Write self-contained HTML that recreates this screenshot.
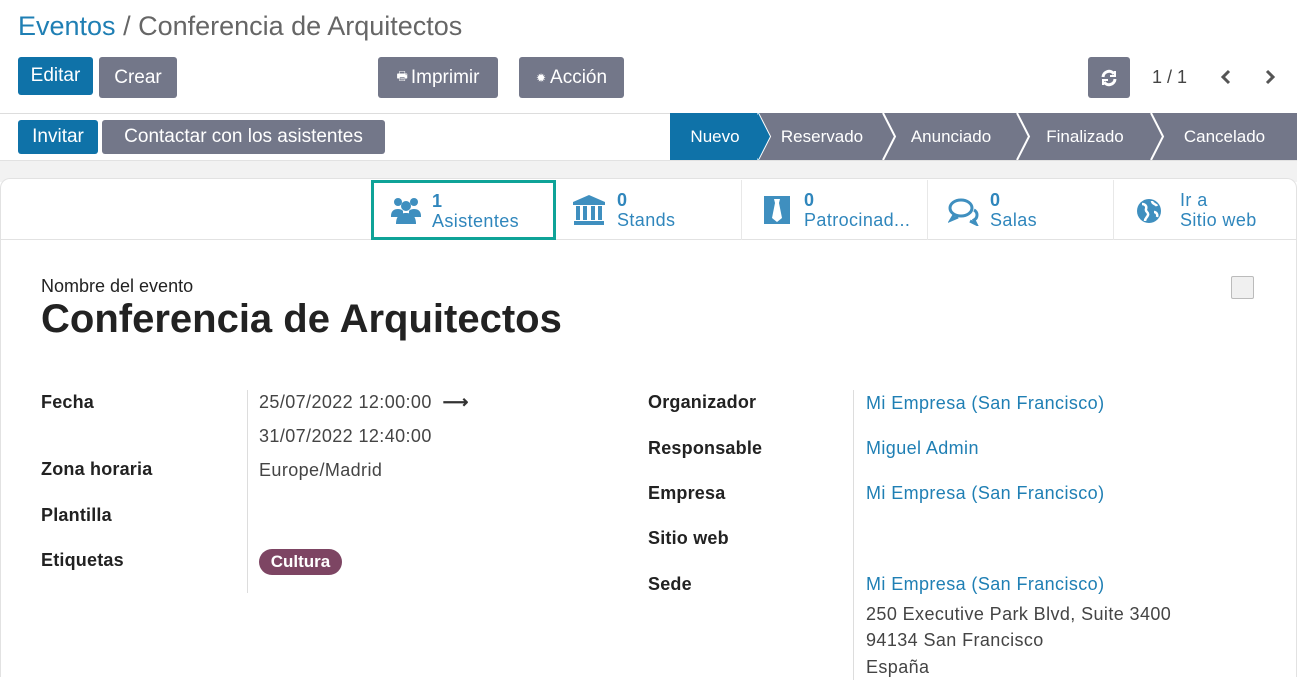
<!DOCTYPE html>
<html><head><meta charset="utf-8"><style>
*{box-sizing:border-box;margin:0;padding:0}
body{width:1297px;height:677px;overflow:hidden;background:#fff;font-family:"Liberation Sans",sans-serif;color:#444;position:relative}
.a{position:absolute;white-space:nowrap}
.btn{position:absolute;color:#fff;font-size:19px;display:flex;align-items:center;justify-content:center;border-radius:3px}
.blue{background:#0f72a8}.grey{background:#737789}
.st{position:absolute;top:113px;height:47px;background:#737789;color:#fff;font-size:17px;display:flex;align-items:center;justify-content:center}
.lbl{position:absolute;font-size:18px;font-weight:bold;color:#222;letter-spacing:0.2px}
.val{position:absolute;font-size:18px;color:#444;white-space:nowrap;letter-spacing:0.4px}
.lnk{color:#1f7fb4}
.sb{position:absolute;top:180px;height:60px;border-left:1px solid #e8e8e8;color:#2f86bc;font-size:18px}
.sb .n{position:absolute;top:10px;font-weight:bold}
.sb .t{position:absolute;top:30px;white-space:nowrap;letter-spacing:0.4px}
</style></head><body>
<div class="a" style="left:18px;top:11px;font-size:27px;color:#666"><span style="color:#1f7fb4">Eventos</span> / Conferencia de Arquitectos</div>
<div class="btn blue" style="left:18px;top:57px;width:75px;height:38px">Editar</div>
<div class="btn grey" style="left:99px;top:57px;width:78px;height:41px">Crear</div>
<div class="btn grey" style="left:378px;top:57px;width:120px;height:41px"><span style="font-size:12px;margin-right:3px">🖶</span>Imprimir</div>
<div class="btn grey" style="left:519px;top:57px;width:105px;height:41px"><span style="font-size:12px;margin-right:4px">✹</span>Acción</div>
<div class="btn grey" style="left:1088px;top:57px;width:42px;height:41px"><svg width="18" height="18" viewBox="0 0 18 18" fill="none" stroke="#fff" stroke-width="3"><path d="M3 8a6 6 0 0 1 11-3"/><path d="M15 10a6 6 0 0 1-11 3"/><path d="M15 2v5h-5M3 16v-5h5" stroke-width="2"/></svg></div>
<div class="a" style="left:1152px;top:67px;font-size:18px;color:#444">1 / 1</div>
<svg class="a" style="left:1220px;top:69px" width="12" height="16"><path d="M9 2 3 8l6 6" stroke="#555" stroke-width="3" fill="none"/></svg>
<svg class="a" style="left:1264px;top:69px" width="12" height="16"><path d="M3 2l6 6-6 6" stroke="#555" stroke-width="3" fill="none"/></svg>
<div class="a" style="left:0;top:113px;width:1297px;border-top:1px solid #ddd"></div>
<div class="btn blue" style="left:18px;top:120px;width:80px;height:34px">Invitar</div>
<div class="btn grey" style="left:102px;top:120px;width:283px;height:34px">Contactar con los asistentes</div>
<div class="st" style="left:670px;width:90px;background:#0f72a8">Nuevo</div>
<div class="st" style="left:760px;width:124px">Reservado</div>
<div class="st" style="left:884px;width:134px">Anunciado</div>
<div class="st" style="left:1018px;width:134px">Finalizado</div>
<div class="st" style="left:1152px;width:145px">Cancelado</div>
<svg class="a" style="left:670px;top:113px" width="627" height="47"><g fill="none" stroke="#fff" stroke-width="2"><path d="M88 0l12 23.5L88 47"/><path d="M213 0l12 23.5L213 47"/><path d="M347 0l12 23.5L347 47"/><path d="M481 0l12 23.5L481 47"/></g><path d="M88 0l12 23.5L88 47z" fill="#0f72a8"/></svg>
<div class="a" style="left:0;top:160px;width:1297px;height:22px;background:#f2f2f2;border-top:1px solid #e2e2e2"></div>
<div class="a" style="left:0;top:178px;width:1297px;height:499px;background:#fff;border:1px solid #e2e2e2;border-bottom:none;border-radius:10px 10px 0 0"></div>
<div class="a" style="left:0;top:239px;width:1297px;border-top:1px solid #e2e2e2"></div>
<div class="sb" style="left:371px;width:185px;border:3px solid #0fa398;top:180px;height:60px">
<svg style="position:absolute;left:15px;top:13px" width="34" height="30" viewBox="0 0 34 30" fill="#3f8fbf"><circle cx="9" cy="6" r="4"/><circle cx="25" cy="6" r="4"/><circle cx="17" cy="10" r="5"/><path d="M2 20c0-5 3-7 7-7s5 2 5 2v6H2z"/><path d="M32 20c0-5-3-7-7-7s-5 2-5 2v6h12z"/><path d="M7 28c0-8 4-11 10-11s10 3 10 11z"/></svg>
<div class="n" style="left:58px;top:8px">1</div><div class="t" style="left:58px;top:28px">Asistentes</div></div>
<div class="sb" style="left:556px;width:185px;border-left:none">
<svg style="position:absolute;left:16px;top:15px" width="34" height="32" viewBox="0 0 34 32" fill="#3f8fbf"><path d="M17 0 1 7v3h32V7z"/><rect x="4" y="11" width="4" height="14"/><rect x="11" y="11" width="4" height="14"/><rect x="19" y="11" width="4" height="14"/><rect x="26" y="11" width="4" height="14"/><rect x="2" y="26" width="30" height="4"/></svg>
<div class="n" style="left:61px">0</div><div class="t" style="left:61px">Stands</div></div>
<div class="sb" style="left:741px;width:186px">
<svg style="position:absolute;left:22px;top:16px" width="26" height="28" viewBox="0 0 26 28"><rect width="26" height="28" fill="#3f8fbf"/><path d="M10 3h6l-1 4 3 15-5 4-5-4 3-15z" fill="#fff"/></svg>
<div class="n" style="left:62px">0</div><div class="t" style="left:62px">Patrocinad...</div></div>
<div class="sb" style="left:927px;width:186px">
<svg style="position:absolute;left:20px;top:18px" width="32" height="28" viewBox="0 0 32 28" fill="none" stroke="#3f8fbf" stroke-width="3"><ellipse cx="13" cy="10" rx="11" ry="8"/><path d="M6 17l-3 5 7-3"/><path d="M26 12c4 2 4 8 0 10l2 4-6-3"/></svg>
<div class="n" style="left:62px">0</div><div class="t" style="left:62px">Salas</div></div>
<div class="sb" style="left:1113px;width:184px">
<svg style="position:absolute;left:22px;top:18px" width="26" height="26" viewBox="0 0 26 26"><circle cx="13" cy="13" r="12" fill="#3f8fbf"/><path d="M6 6c3 0 5 2 4 5s3 3 2 6-3 3-3 6M16 3c0 3 4 3 5 5M18 14c2 0 4 2 3 5" stroke="#fff" stroke-width="2.5" fill="none"/></svg>
<div class="t" style="left:66px;top:10px">Ir a</div><div class="t" style="left:66px">Sitio web</div></div>
<div class="a" style="left:41px;top:276px;font-size:18px;color:#222">Nombre del evento</div>
<div class="a" style="left:41px;top:297px;font-size:40px;font-weight:bold;color:#222">Conferencia de Arquitectos</div>
<div class="a" style="left:1231px;top:276px;width:23px;height:23px;border:1px solid #bbb;background:#f0f0f0;border-radius:2px"></div>
<div class="a" style="left:247px;top:390px;height:203px;border-left:1px solid #ddd"></div>
<div class="a" style="left:853px;top:390px;height:290px;border-left:1px solid #ddd"></div>
<div class="lbl" style="left:41px;top:392px">Fecha</div>
<div class="lbl" style="left:41px;top:459px">Zona horaria</div>
<div class="lbl" style="left:41px;top:505px">Plantilla</div>
<div class="lbl" style="left:41px;top:550px">Etiquetas</div>
<div class="val" style="left:259px;top:392px">25/07/2022 12:00:00 &nbsp;<b style="color:#333">⟶</b></div>
<div class="val" style="left:259px;top:426px">31/07/2022 12:40:00</div>
<div class="val" style="left:259px;top:460px">Europe/Madrid</div>
<div class="a" style="left:259px;top:549px;height:26px;width:83px;border-radius:13px;background:#7d4563;color:#fff;font-weight:bold;font-size:17px;display:flex;align-items:center;justify-content:center">Cultura</div>
<div class="lbl" style="left:648px;top:392px">Organizador</div>
<div class="lbl" style="left:648px;top:438px">Responsable</div>
<div class="lbl" style="left:648px;top:483px">Empresa</div>
<div class="lbl" style="left:648px;top:528px">Sitio web</div>
<div class="lbl" style="left:648px;top:574px">Sede</div>
<div class="val lnk" style="left:866px;top:393px">Mi Empresa (San Francisco)</div>
<div class="val lnk" style="left:866px;top:438px">Miguel Admin</div>
<div class="val lnk" style="left:866px;top:483px">Mi Empresa (San Francisco)</div>
<div class="val lnk" style="left:866px;top:574px">Mi Empresa (San Francisco)</div>
<div class="val" style="left:866px;top:604px">250 Executive Park Blvd, Suite 3400</div>
<div class="val" style="left:866px;top:630px">94134 San Francisco</div>
<div class="val" style="left:866px;top:657px">España</div>
</body></html>
